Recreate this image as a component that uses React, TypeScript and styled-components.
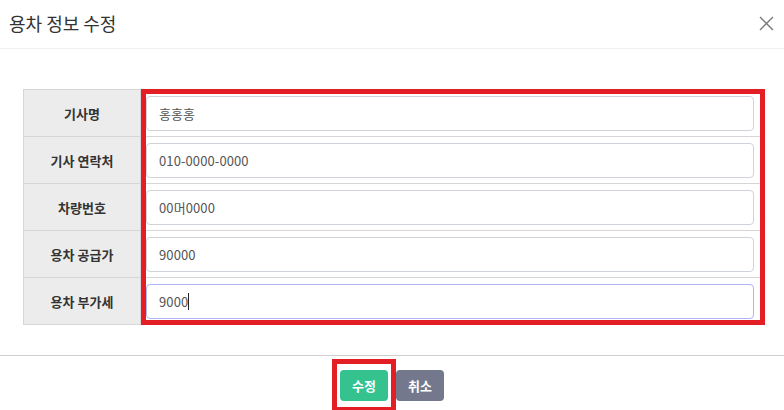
import React from "react";
import styled, { createGlobalStyle } from "styled-components";

const Global = createGlobalStyle`
  html, body { margin: 0; padding: 0; background: #fff; }
  body { font-family: "Noto Sans CJK KR", "Noto Sans", sans-serif; color: #333; }
  * { box-sizing: border-box; }
`;

const Modal = styled.div`
  width: 784px;
  height: 410px;
  display: flex;
  flex-direction: column;
  overflow: hidden;
`;

const Header = styled.div`
  height: 49px;
  display: flex;
  align-items: center;
  justify-content: space-between;
  padding: 0 8px 2px 9px;
  border-bottom: 1px solid #efefef;
`;

const Title = styled.h4`
  margin: 0;
  font-size: 18px;
  font-weight: 400;
  color: #333;
  letter-spacing: 0;
`;

const Close = styled.button`
  width: 20px;
  height: 20px;
  padding: 0;
  border: 0;
  background: none;
  display: flex;
  align-items: center;
  justify-content: center;
  color: #777;
`;

const Body = styled.div`
  padding: 40px 19px 30px 23px;
  border-bottom: 1px solid #cfcfcf;
`;

const TableWrap = styled.div`
  position: relative;
`;

const Table = styled.div`
  border: 1px solid #d6d6d6;
  display: flex;
  flex-direction: column;
`;

const Row = styled.div`
  display: grid;
  grid-template-columns: 117px 1fr;
  height: 47px;
  border-bottom: 1px solid #d6d6d6;
  &:last-child { border-bottom: 0; height: 46px; }
`;

const Label = styled.div`
  background: #ececec;
  border-right: 1px solid #d6d6d6;
  display: flex;
  align-items: center;
  justify-content: center;
  font-size: 13px;
  font-weight: 700;
  color: #333;
`;

const Cell = styled.div`
  padding: 6px 10px 5px 5px;
  display: flex;
  align-items: center;
`;

const Field = styled.div<{ $focused?: boolean }>`
  width: 100%;
  height: 35px;
  border: 1px solid ${(p) => (p.$focused ? "#aeb6f6" : "#ced4da")};
  border-radius: 4px;
  padding: 0 12px;
  display: flex;
  align-items: center;
  font-size: 13px;
  color: #555;
  background: #fff;
  letter-spacing: 0.1px;
`;

const Caret = styled.span`
  display: inline-block;
  width: 1px;
  height: 17px;
  background: #222;
`;

const Highlight = styled.div<{ $t: number; $r: number; $b: number; $l: number }>`
  position: absolute;
  top: ${(p) => p.$t}px;
  right: ${(p) => p.$r}px;
  bottom: ${(p) => p.$b}px;
  left: ${(p) => p.$l}px;
  border: 5px solid #e31e24;
  pointer-events: none;
`;

const Footer = styled.div`
  display: flex;
  justify-content: center;
  gap: 8px;
  padding-top: 14px;
`;

const BtnWrap = styled.div`
  position: relative;
`;

const Button = styled.button<{ $variant: "primary" | "secondary" }>`
  width: 48px;
  height: 31px;
  border: 0;
  border-radius: 4px;
  font-family: "Noto Sans CJK KR", "Noto Sans", sans-serif;
  font-size: 13px;
  font-weight: 700;
  color: #fff;
  background: ${(p) => (p.$variant === "primary" ? "#34c38f" : "#74788d")};
  padding: 0;
`;

const rows: { label: string; value: string; focused?: boolean }[] = [
  { label: "기사명", value: "홍홍홍" },
  { label: "기사 연락처", value: "010-0000-0000" },
  { label: "차량번호", value: "00머0000" },
  { label: "용차 공급가", value: "90000" },
  { label: "용차 부가세", value: "9000", focused: true },
];

export default function App() {
  return (
    <Modal>
      <Global />
      <Header>
        <Title>용차 정보 수정</Title>
        <Close aria-label="close">
          <svg width="15" height="15" viewBox="0 0 15 15">
            <path d="M1 1L14 14M14 1L1 14" stroke="#7a7a7a" strokeWidth="1.4" fill="none" />
          </svg>
        </Close>
      </Header>
      <Body>
        <TableWrap>
          <Table>
            {rows.map((r) => (
              <Row key={r.label}>
                <Label>{r.label}</Label>
                <Cell>
                  <Field $focused={r.focused}>
                    {r.value}
                    {r.focused && <Caret />}
                  </Field>
                </Cell>
              </Row>
            ))}
          </Table>
          <Highlight $t={0} $r={0} $b={0} $l={118} />
        </TableWrap>
      </Body>
      <Footer>
        <BtnWrap>
          <Button $variant="primary">수정</Button>
          <Highlight $t={-11} $r={-8} $b={-11} $l={-8} />
        </BtnWrap>
        <Button $variant="secondary">취소</Button>
      </Footer>
    </Modal>
  );
}
